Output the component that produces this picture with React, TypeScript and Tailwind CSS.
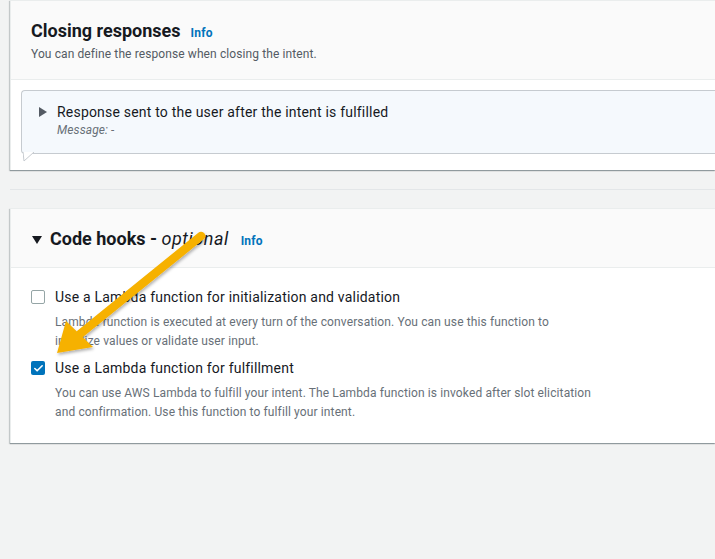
import { Check } from "lucide-react";

const font = { fontFamily: "Roboto, 'Liberation Sans', sans-serif" };

const InfoLink = ({ gap = "ml-[10px]" }: { gap?: string }) => (
  <span className={`${gap} text-[12px] font-bold leading-none tracking-[0.2px] text-[#0073bb]`}>Info</span>
);

const Checkbox = ({ checked }: { checked: boolean }) =>
  checked ? (
    <span className="flex h-[14px] w-[14px] shrink-0 items-center justify-center rounded-[2px] bg-[#0073bb]">
      <Check size={11} strokeWidth={3.5} color="#fff" />
    </span>
  ) : (
    <span className="block h-[14px] w-[14px] shrink-0 rounded-[2px] border border-[#95a5a6] bg-white" />
  );

const Arrow = () => (
  <svg className="pointer-events-none absolute left-0 top-0" width="715" height="559">
    <defs>
      <filter id="sh" x="-20%" y="-20%" width="140%" height="140%">
        <feDropShadow dx="1" dy="2" stdDeviation="1.5" floodColor="#000" floodOpacity="0.3" />
      </filter>
    </defs>
    <g filter="url(#sh)">
      <line x1="201" y1="236" x2="80" y2="334" stroke="#f6b100" strokeWidth="8.5" strokeLinecap="round" />
      <polygon points="57,353 66,321 93,347" fill="#f6b100" />
    </g>
  </svg>
);

export default function App() {
  return (
    <div className="relative h-[559px] w-[715px] overflow-hidden bg-[#f2f3f3] pl-[10px] text-[#16191f]" style={font}>
      {/* Closing responses */}
      <div className="border-l border-t border-[#eaeded] bg-white shadow-[0_1px_1px_0_rgba(0,28,36,0.3),-1px_1px_1px_0_rgba(0,28,36,0.15)]">
        <div className="border-b border-[#eaeded] bg-[#fafafa] px-[20px] pb-[17px] pt-[19px]">
          <div className="flex items-baseline">
            <h2 className="text-[18px] font-bold leading-[22px]">Closing responses</h2>
            <InfoLink />
          </div>
          <p className="mt-[4px] text-[12px] leading-[16px] tracking-[0.1px] text-[#545b64]">
            You can define the response when closing the intent.
          </p>
        </div>
        <div className="pb-[16px] pl-[10px] pt-[10px]">
          <div className="relative rounded-l-[4px] border-y border-l border-[#c6cbd0] bg-[#f5f9fd] pb-[15px] pl-[17px] pt-[11px]">
            <div className="flex items-center">
              <svg width="8" height="10" viewBox="0 0 8 10" className="mr-[10px]">
                <polygon points="0,0 8,5 0,10" fill="#545b64" />
              </svg>
              <span className="text-[14px] leading-[20px] tracking-[0.2px]">
                Response sent to the user after the intent is fulfilled
              </span>
            </div>
            <div className="pl-[18px] text-[12px] italic leading-[16px] tracking-[0.1px] text-[#687078]">Message: -</div>
            <svg className="absolute -bottom-[9px] left-[1px]" width="12" height="10" viewBox="0 0 12 10">
              <polygon points="0,0 11,0 1,9" fill="#ffffff" />
              <polyline points="0,0 1,9 11,0" fill="none" stroke="#c6cbd0" strokeWidth="1" />
            </svg>
          </div>
        </div>
      </div>

      <div className="mt-[19px] border-t border-[#e3e6e8]" />

      {/* Code hooks */}
      <div className="mt-[18px] border-l border-t border-[#eaeded] bg-white shadow-[0_1px_1px_0_rgba(0,28,36,0.3),-1px_1px_1px_0_rgba(0,28,36,0.15)]">
        <div className="flex items-center border-b border-[#eaeded] bg-[#fafafa] pb-[17px] pl-[21px] pt-[19px]">
          <svg width="10" height="8" viewBox="0 0 10 8" className="mr-[8px] mt-[1px]">
            <polygon points="0,0 10,0 5,8" fill="#16191f" />
          </svg>
          <h2 className="text-[18px] font-bold leading-[22px]">
            Code hooks - <span className="font-normal italic tracking-[0.5px]">optional</span>
          </h2>
          <InfoLink gap="ml-[12px] mt-[3px]" />
        </div>
        <div className="flex flex-col gap-[7px] pb-[21px] pl-[20px] pt-[19px]">
          <div className="flex">
            <div className="pt-[3px]">
              <Checkbox checked={false} />
            </div>
            <div className="ml-[10px]">
              <div className="text-[14px] leading-[20px] tracking-[0.2px]">
                Use a Lambda function for initialization and validation
              </div>
              <p className="mt-[6px] text-[12px] leading-[19px] tracking-[0.12px] text-[#687078]">
                Lambda function is executed at every turn of the conversation. You can use this function to
                <br />
                initialize values or validate user input.
              </p>
            </div>
          </div>
          <div className="flex">
            <div className="pt-[3px]">
              <Checkbox checked={true} />
            </div>
            <div className="ml-[10px]">
              <div className="text-[14px] leading-[20px] tracking-[0.2px]">Use a Lambda function for fulfillment</div>
              <p className="mt-[6px] text-[12px] leading-[19px] tracking-[0.12px] text-[#687078]">
                You can use AWS Lambda to fulfill your intent. The Lambda function is invoked after slot elicitation
                <br />
                and confirmation. Use this function to fulfill your intent.
              </p>
            </div>
          </div>
        </div>
      </div>

      <Arrow />
    </div>
  );
}
